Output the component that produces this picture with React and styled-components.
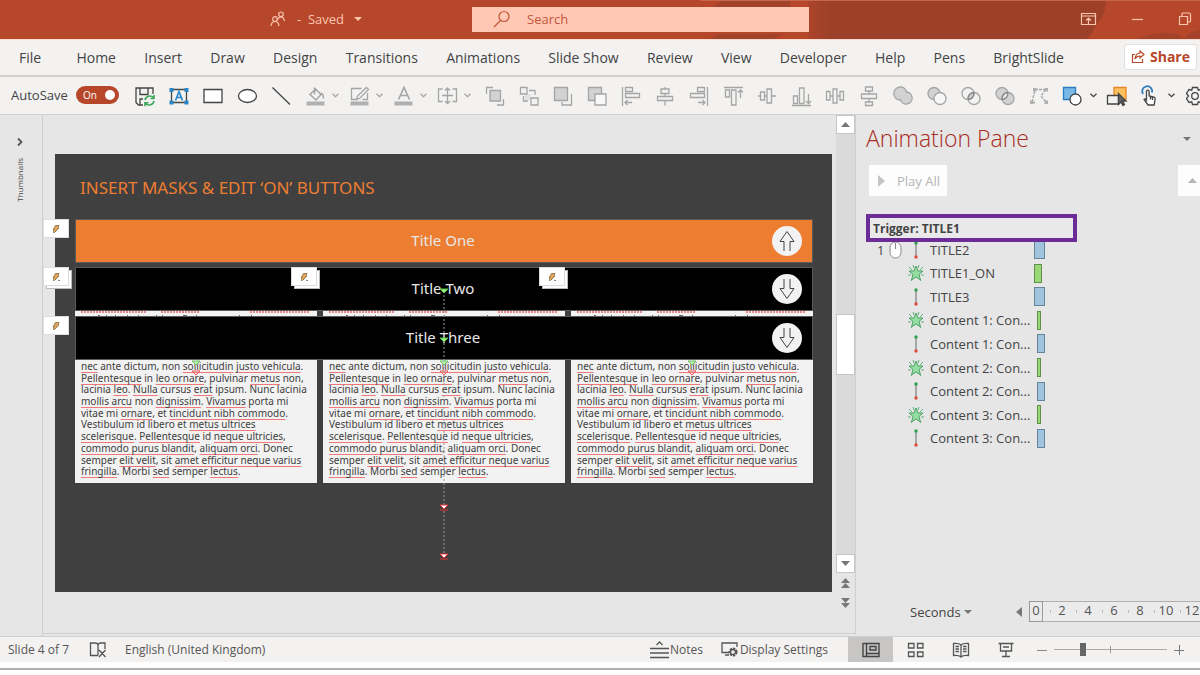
import React from 'react';
import styled, { createGlobalStyle, css } from 'styled-components';

const GlobalStyle = createGlobalStyle`
  * {
    box-sizing: border-box;
  }
  body {
    margin: 0;
    background: #fff;
    color: #444;
    font-family: 'Open Sans', 'Noto Sans', sans-serif;
  }
  button {
    font: inherit;
    color: inherit;
    border: none;
    background: none;
    padding: 0;
  }
`;

const Window = styled.div`
  min-height: 100vh;
  display: flex;
  flex-direction: column;
  overflow: hidden;
`;

/* Title bar */

const TitleBar = styled.header`
  position: relative;
  display: flex;
  align-items: center;
  height: 39px;
  padding-left: 270px;
  padding-bottom: 1px;
  background: #b7472a;
  color: #fbc5b0;
`;

const TitleArt = styled.svg`
  position: absolute;
  top: 0;
  right: 0;
  width: 500px;
  height: 39px;
`;

const FileStatus = styled.button`
  display: flex;
  align-items: center;
  gap: 10px;
  width: 202px;
  font-size: 13px;
  color: #fbc5b0;
`;

const SearchBox = styled.label`
  position: relative;
  display: flex;
  align-items: center;
  gap: 16px;
  flex: 0 1 337px;
  height: 25px;
  padding-left: 21px;
  background: #ffc8b4;
  color: #c4573a;
`;

const SearchInput = styled.input`
  flex: 1;
  min-width: 0;
  border: none;
  outline: none;
  padding: 0;
  background: transparent;
  font: 13px 'Open Sans', sans-serif;
  color: #c4573a;
  &::placeholder {
    color: #c4573a;
    opacity: 1;
  }
`;

const WindowButtons = styled.div`
  position: relative;
  display: flex;
  gap: 34px;
  margin-left: auto;
  margin-right: 8px;
  svg {
    display: block;
  }
`;

/* Ribbon tabs */

const TabBar = styled.nav`
  display: flex;
  align-items: center;
  height: 38px;
  padding: 0 3px 2px 19px;
  background: #f3f2f1;
  border-top: 1px solid #fbdcd0;
  border-bottom: 2px solid #d2d0ce;
`;

const Tabs = styled.div`
  display: flex;
  flex: 1;
  justify-content: space-between;
  margin-right: 60px;
  padding-top: 2px;
`;

const Tab = styled.button`
  font-size: 14px;
  line-height: 20px;
  white-space: nowrap;
  &:first-child {
    padding-right: 7px;
  }
`;

const ShareButton = styled.button`
  display: flex;
  align-items: center;
  gap: 5px;
  height: 26px;
  padding: 0 6px;
  background: #fff;
  border: 1px solid #e1dfdd;
  border-radius: 3px;
  color: #b7472a;
  font-size: 14px;
  font-weight: 700;
`;

/* Quick access toolbar */

const Toolbar = styled.div`
  display: flex;
  align-items: center;
  height: 38px;
  padding-left: 11px;
  background: #f3f2f1;
  border-bottom: 1px solid #d2d0ce;
  overflow: hidden;
`;

const AutoSave = styled.label`
  display: flex;
  align-items: center;
  justify-content: space-between;
  flex: none;
  width: 108px;
  margin-right: 9px;
  padding-bottom: 2px;
  font-size: 13px;
`;

const Toggle = styled.span`
  position: relative;
  display: flex;
  align-items: center;
  width: 43px;
  height: 18px;
  padding-left: 7px;
  border-radius: 9px;
  background: #b7472a;
  color: #fff;
  font-size: 10px;
`;

const ToggleInput = styled.input`
  appearance: none;
  position: absolute;
  inset: 0;
  margin: 0;
  &::after {
    content: '';
    position: absolute;
    top: 4px;
    right: 4px;
    width: 10px;
    height: 10px;
    border-radius: 50%;
    background: #fff;
  }
`;

const ToolButton = styled.button`
  display: flex;
  align-items: center;
  flex: none;
  gap: 5px;
  width: ${p => (p.$menu ? 44 : 34)}px;
  height: 32px;
  padding-left: 5px;
  margin-right: ${p => (p.$endsGroup ? 4 : 0)}px;
`;

const ToolIcon = styled.svg`
  flex: none;
  width: 24px;
  height: 24px;
  fill: none;
  stroke: ${p => (p.$active ? '#444' : '#a5a5a5')};
  stroke-width: 1.3;
`;

/* Workspace */

const Workspace = styled.main`
  display: flex;
  flex: 1;
  background: #e6e6e6;
`;

const ThumbnailRail = styled.button`
  display: flex;
  flex-direction: column;
  align-items: center;
  gap: 11px;
  flex: none;
  width: 43px;
  padding: 22px 3px 0 0;
  border-right: 1px solid #cfcfcf;
  font-size: 8px;
`;

const RailLabel = styled.span`
  writing-mode: vertical-rl;
  transform: rotate(180deg);
`;

const Canvas = styled.section`
  display: flex;
  flex: 1;
  min-width: 0;
  margin-bottom: 2px;
  padding: 39px 4px 41px 12px;
  border-bottom: 1px solid #cfcfcf;
`;

const Slide = styled.div`
  position: relative;
  flex: 1;
  padding: 23px 19px 0 20px;
  background: #404040;
  font-family: 'Noto Sans', sans-serif;
`;

const SlideTitle = styled.h1`
  margin: 0 0 20px;
  padding-left: 5px;
  font-size: 17px;
  line-height: 22px;
  font-weight: 400;
  color: #ed7d31;
`;

const Bar = styled.div`
  position: relative;
  display: flex;
  align-items: center;
  justify-content: center;
  height: 44px;
  padding: 0 2px 2px 0;
  border: 1px solid #5a5a5a;
  background: ${p => (p.$on ? '#ed7d31' : '#000')};
  color: #e8e8e8;
  font-size: 15px;
`;

const RoundButton = styled.button`
  position: absolute;
  top: 6px;
  right: 10px;
  display: grid;
  place-items: center;
  width: 30px;
  height: 30px;
  border-radius: 50%;
  background: #f2f2f2;
  svg {
    transform: ${p => (p.$down ? 'rotate(180deg)' : 'none')};
  }
`;

const Tag = styled.span`
  position: absolute;
  top: -1px;
  left: ${p => p.$left};
  display: grid;
  place-items: center;
  width: 26px;
  height: 19px;
  background: #fff;
  border: 1px solid #ddd;
  ${p =>
    p.$stacked &&
    css`
      box-shadow: 3px 3px 0 -1px #fff, 3px 3px 0 0 #bbb;
    `}
`;

const Columns = styled.div`
  display: grid;
  grid-template-columns: repeat(3, 1fr);
  gap: 6px;
`;

const Peek = styled.svg`
  width: 100%;
  height: 5px;
  background: #f2f2f2;
`;

const Gap = styled.div`
  height: 4px;
`;

const TextBox = styled.div`
  display: grid;
  grid-auto-rows: 1fr;
  height: 123px;
  padding: 0 6px 6px;
  background: #f2f2f2;
  color: #404040;
  font-size: 10px;
  line-height: 12px;
  white-space: nowrap;
  div {
    height: 11px;
  }
`;

const Misspelt = styled.span`
  text-decoration: underline solid #f07878 1px;
  text-underline-offset: 2px;
  text-decoration-skip-ink: none;
`;

const MotionPaths = styled.svg`
  position: absolute;
  inset: 0;
  width: 100%;
  height: 100%;
`;

/* Scroll bar */

const ScrollBar = styled.div`
  display: flex;
  flex-direction: column;
  flex: none;
  width: 20px;
  padding-bottom: 20px;
  margin-bottom: 2px;
  border-right: 1px solid #cfcfcf;
  border-bottom: 1px solid #cfcfcf;
`;

const ScrollTrack = styled.div`
  flex: 1;
  padding-top: 180px;
  background: #dadada;
`;

const ScrollThumb = styled.div`
  height: 61px;
  background: #fff;
  border: 1px solid #c6c6c6;
`;

const ScrollButton = styled.button`
  display: grid;
  place-items: center;
  height: ${p => (p.$plain ? 20 : 19)}px;
  background: ${p => (p.$plain ? 'none' : '#fff')};
  border: ${p => (p.$plain ? 'none' : '1px solid #c6c6c6')};
`;

/* Animation pane */

const Pane = styled.aside`
  display: flex;
  flex-direction: column;
  flex: none;
  width: 344px;
  padding: 7px 0 14px 10px;
  overflow: hidden;
`;

const PaneHeader = styled.div`
  display: flex;
  align-items: center;
  justify-content: space-between;
  padding-right: 9px;
  margin-bottom: 10px;
`;

const PaneTitle = styled.h2`
  margin: 0;
  padding-bottom: 1px;
  font-size: 23px;
  line-height: 32px;
  font-weight: 300;
  color: #a82c1c;
`;

const PaneButtons = styled.div`
  display: flex;
  justify-content: space-between;
  padding-left: 3px;
`;

const PaneButton = styled.button`
  display: flex;
  align-items: center;
  gap: 12px;
  height: 31px;
  width: ${p => (p.$small ? 22 : 78)}px;
  padding-left: 9px;
  background: #fdfdfd;
  color: #b4b4b4;
  font-size: 13px;
  white-space: nowrap;
`;

const Trigger = styled.div`
  position: relative;
  z-index: 1;
  width: 211px;
  height: 28px;
  margin-top: 18px;
  padding-left: 3px;
  border: 4px solid #6b2c98;
  background: #e9e9e9;
  font-size: 12px;
  line-height: 21px;
  font-weight: 700;
`;

const EffectList = styled.ul`
  display: grid;
  grid-auto-rows: 1fr;
  height: 212px;
  margin: -4px 0 0;
  padding: 0;
  list-style: none;
`;

const Effect = styled.li`
  display: grid;
  grid-template-columns: 12px 18px 18px 108px auto;
  align-items: center;
  padding-left: 11px;
  font-size: 13px;
  line-height: 20px;
  white-space: nowrap;
`;

const EffectIcon = styled.svg`
  width: 18px;
  height: 20px;
`;

const EffectName = styled.span`
  padding-left: 5px;
`;

const Timing = styled.span`
  width: ${p => p.$width}px;
  height: 19px;
  margin-left: ${p => (p.$late ? 4 : 1)}px;
  border: 1px solid ${p => (p.$entrance ? '#5f8f4c' : '#65859c')};
  background: ${p => (p.$entrance ? '#98d877' : '#a0c4dc')};
`;

const Timeline = styled.div`
  display: flex;
  align-items: center;
  margin-top: auto;
  padding-left: 44px;
  font-size: 13px;
`;

const UnitSelect = styled.button`
  display: flex;
  align-items: center;
  gap: 3px;
  flex: none;
  width: 106px;
`;

const Ruler = styled.div`
  display: flex;
  flex: 1;
  min-width: 0;
  height: 21px;
  margin-left: 7px;
  border: 1px solid #b0b0b0;
  border-right: none;
  background: #ebebeb;
`;

const Tick = styled.span`
  display: flex;
  justify-content: space-between;
  align-items: center;
  flex: none;
  width: 26px;
  line-height: 19px;
  color: #555;
  &::after {
    content: '';
    width: 1px;
    height: 3px;
    margin-right: 5px;
    background: #bbb;
  }
`;

const TickLabel = styled.span`
  display: flex;
  justify-content: center;
  width: 14px;
  height: 21px;
  margin-left: -1px;
  outline: ${p => (p.$current ? '1px solid #999' : 'none')};
  outline-offset: -1px;
`;

/* Status bar */

const StatusBar = styled.footer`
  display: flex;
  align-items: center;
  height: 26px;
  padding-left: 8px;
  background: #f3f2f1;
  border-top: 1px solid #d2d0ce;
  font-size: 12px;
  color: #555;
`;

const StatusText = styled.span`
  width: ${p => p.$width || 'auto'};
  white-space: nowrap;
  svg {
    display: block;
  }
`;

const StatusTools = styled.div`
  display: flex;
  gap: 18px;
  margin-left: auto;
  margin-right: 20px;
`;

const StatusButton = styled.button`
  display: flex;
  align-items: center;
  gap: 1px;
  white-space: nowrap;
`;

const ViewButton = styled.button`
  display: grid;
  place-items: center;
  width: 45px;
  height: 25px;
  background: ${p => (p.$selected ? '#c8c6c4' : 'none')};
`;

const Zoom = styled.div`
  display: flex;
  align-items: center;
  justify-content: space-between;
  width: 147px;
  margin: 0 16px 0 9px;
`;

const ZoomSlider = styled.input`
  appearance: none;
  width: 113px;
  height: 12px;
  margin: 0;
  background: linear-gradient(#999, #999) 50% 50% / 1px 7px no-repeat,
    linear-gradient(#aaa, #aaa) 50% 50% / 100% 1px no-repeat;
  &::-webkit-slider-thumb {
    appearance: none;
    width: 6px;
    height: 13px;
    background: #666;
  }
`;

const WindowEdge = styled.div`
  height: 13px;
  padding-top: 6px;
  &::before {
    content: '';
    display: block;
    height: 2px;
    background: #b0b0b0;
  }
`;

const Triangle = ({ d = 'M0 0h8l-4 4z', w = 8, h = 4, color = '#777' }) => (
  <svg width={w} height={h} fill={color}>
    <path d={d} />
  </svg>
);

const Chevron = ({ color = '#a5a5a5' }) => (
  <svg width="7" height="5" fill="none" stroke={color} strokeWidth="1.3">
    <path d="M.5 .7l3 3 3-3" />
  </svg>
);

const LIGHT = '#e2e2e2';
const GREY = '#d2d2d2';

const tools = [
  { name: 'Save', active: true, art: <><path d="M10 21H5.500L3 18.500V4h17v6M7 4v6.500h8V4M7 21v-6h3" /><g stroke="#3da85a" strokeWidth="1.600"><path d="M12 16a5 5 0 0 1 8.500-2.500M21 11v3.500h-3.500M21 17a5 5 0 0 1-8.500 2.500M12 22.200v-3.500h3.500" /></g></> },
  { name: 'Text Box', active: true, art: <><path d="M4.500 5.500h15v13h-15z" /><g fill="#2b88c8" stroke="none"><path d="M2.500 4h4v4h-4zM17.500 4h4v4h-4zM2.500 16.500h4v4h-4zM17.500 16.500h4v4h-4z" /></g><path d="M8.500 16.500L12 7.500l3.500 9M9.800 13.500h4.400" stroke="#2b88c8" strokeWidth="1.700" /></> },
  { name: 'Rectangle', active: true, art: <path d="M3 5.500h18v13H3z" fill="#fff" /> },
  { name: 'Oval', active: true, art: <ellipse cx="12.500" cy="12" rx="9" ry="6.500" fill="#fff" /> },
  { name: 'Line', active: true, art: <path d="M3.500 3.500l17.500 17" /> },
  { name: 'Shape Fill', menu: true, art: <><path d="M3.500 17.500h18v4h-18z" fill="#b0b0b0" stroke="none" /><path d="M11.500 3.500v7M12.500 5l5.500 5.500-5 5.500L7 10.500zM17.500 10q2.500-2 3 4.500" strokeWidth="1.500" /></> },
  { name: 'Shape Outline', menu: true, art: <><path d="M3.500 17.500h18v4h-18z" fill="#b0b0b0" stroke="none" /><path d="M14.500 4.500H4.500v11h5M20.500 9v6.500h-5M19.500 3.500l2 2-8.500 8.500-3.500 1.500 1-3.500z" /></> },
  { name: 'Font Color', menu: true, art: <><path d="M3.500 17.500h18v4h-18z" fill="#b0b0b0" stroke="none" /><path d="M7.500 15.500L13 3.500l5.500 12M9.500 11.500h7" strokeWidth="1.600" /></> },
  { name: 'Resize', menu: true, endsGroup: true, art: <path d="M7.500 5h-4v12.500h4M17.500 5h4v12.500h-4M7 11.500h11M12.500 4v15.500M10 6.500L12.500 4 15 6.500M10 17l2.500 2.500L15 17" /> },
  { name: 'Bring to Front', art: <><path d="M10 3.500H3.500V10M20.500 15v6H14" /><path d="M7 6.500h10.500v10.500H7z" fill={GREY} /></> },
  { name: 'Send to Back', art: <><path d="M12 6.500h6V11M6.500 12v5H11" /><path d="M8 10h6v6H8z" fill={LIGHT} stroke="none" /><path d="M3.500 3.500H10V10H3.500zM14 14h7v7h-7z" /></> },
  { name: 'Bring Forward', art: <><path d="M20.500 10v11H11v-3" /><path d="M3.500 3.500h13v13h-13z" fill={GREY} /></> },
  { name: 'Send Backward', art: <><path d="M3.500 3.500h13v13h-13z" fill={GREY} /><path d="M10 10h11v11H10z" fill="#f8f8f8" /></> },
  { name: 'Align Left', art: <path d="M3.500 3v19M6.500 3.500h7v4h-7zM6.500 9.500h14v4h-14zM13 18.500H6M8.500 16L6 18.500 8.500 21" /> },
  { name: 'Align Center', art: <path d="M12 3v2M12 9.500v3M12 16.500v5M8 5h8v4.500H8zM4.500 12.500h15v4h-15z" /> },
  { name: 'Align Right', art: <path d="M20.500 3v19M10.500 3.500h7v4h-7zM3.500 9.500h14v4h-14zM11 18.500h7M15.500 16l2.500 2.500-2.500 2.500" /> },
  { name: 'Align Top', art: <path d="M3 3.500h19M4.500 6h4v7h-4zM10.500 6H15v15h-4.500zM19.500 14V6M17 8.500L19.500 6 22 8.500" /> },
  { name: 'Align Middle', art: <path d="M3 12h2.500M9.500 12H12M16.500 12H21M5.500 8h4v8h-4zM12 5h4.500v14H12z" /> },
  { name: 'Align Bottom', art: <path d="M3 21.500h19M4.500 12h4v7.500h-4zM10.500 4H15v15.500h-4.500zM19.500 10v9.500M17 17l2.500 2.500L22 17" /> },
  { name: 'Distribute Horizontally', art: <path d="M3.500 7.500h3.500v8.500H3.500zM10 5h4v14h-4zM17 7.500h3.500v8.500H17zM7 12h3M14 12h3" /> },
  { name: 'Distribute Vertically', art: <path d="M8.500 3h7v4h-7zM4.500 10h15v4.500h-15zM8.500 18h7v3.500h-7zM12 7v3M12 14.500V18" /> },
  { name: 'Union', art: <path d="M9 3a6 6 0 0 1 6.500 5 6 6 0 1 1-6 8A6.500 6.500 0 1 1 9 3z" fill={GREY} /> },
  { name: 'Combine', art: <><circle cx="9" cy="9.500" r="6" fill={GREY} /><circle cx="15" cy="14.500" r="6" fill="#f7f7f7" /></> },
  { name: 'Fragment', art: <><circle cx="9" cy="9.500" r="6" /><circle cx="15" cy="14.500" r="6" /><path d="M9.200 15.500a6 6 0 0 1 5.600-7A6 6 0 0 1 9.200 15.500z" fill={GREY} stroke="#888" /></> },
  { name: 'Intersect', art: <><circle cx="9" cy="9.500" r="6" fill={GREY} /><circle cx="15" cy="14.500" r="6" fill={GREY} /><path d="M9.200 15.500a6 6 0 0 1 5.600-7A6 6 0 0 1 9.200 15.500z" fill="#ececec" stroke="#888" /></> },
  { name: 'Edit Points', art: <><path d="M8 5.500h10M5 18L8 6M18.500 5.500L14 12l5 6M5 18.500h4" strokeDasharray="3 1" /><g fill="#b0b0b0" stroke="none"><path d="M6 4h3.500v3.500H6zM17.500 4H21v3.500h-3.500zM3 16.500h3.500V20H3zM17.500 16.500H21V20h-3.500z" /></g></> },
  { name: 'Shapes', active: true, menu: true, art: <><path d="M2.500 3.500h12v12h-12z" fill="#7ab8e8" stroke="#2b7cc0" /><circle cx="14.500" cy="15.500" r="5.500" fill="#fff" /></> },
  { name: 'Selection Pane', active: true, art: <><path d="M9 3.500h12v12H9z" fill="#fbc15e" stroke="#e8862a" /><path d="M2.500 11.500h11v8.500h-11z" fill="#f3f2f1" /><path d="M13.500 9.500v11l2.500-2.500 2 3.500 1.500-1-2-3.500h3.500z" fill="#666" stroke="#444" /></> },
  { name: 'Touch Mode', active: true, menu: true, art: <><path d="M4 10a5 5 0 1 1 9-1.500" stroke="#2b7cc0" strokeWidth="1.800" /><path d="M7.500 16V7.500a1.300 1.300 0 0 1 2.600 0v4.500l5 1q1.200.5 1 2l-1 6h-6L5 15.500q1-1.500 2.500.5zM11.500 12.500v3M13.500 13v3" fill="#fff" /></> },
  { name: 'Options', active: true, art: <><path d="M9.500 3.500h5l.8 2.700 2.700-.7 2.500 4-2 2.500 2 2.500-2.500 4-2.700-.7-.8 2.700h-5l-.8-2.700-2.700.7-2.500-4 2-2.500-2-2.500 2.500-4 2.700.7z" /><circle cx="12" cy="12" r="3.300" /></> },
];

const tabs = [
  'File', 'Home', 'Insert', 'Draw', 'Design', 'Transitions', 'Animations',
  'Slide Show', 'Review', 'View', 'Developer', 'Help', 'Pens', 'BrightSlide',
];

// Words in [brackets] carry the spell checker underline
const bodyLines = [
  '[nec] ante dictum, non [sollicitudin] [justo vehicula].',
  '[Pellentesque] in [leo ornare], pulvinar [metus] non,',
  'lacinia [leo]. [Nulla] cursus [erat] ipsum. Nunc lacinia',
  '[mollis arcu] non [dignissim]. [Vivamus] porta mi',
  'vitae mi [ornare], et [tincidunt nibh commodo].',
  'Vestibulum id libero et [metus ultrices]',
  '[scelerisque]. [Pellentesque] id [neque ultricies],',
  '[commodo purus blandit], [aliquam orci]. Donec',
  'semper [elit velit], sit [amet efficitur neque varius]',
  '[fringilla]. Morbi [sed] semper [lectus].',
];

const effects = [
  { name: 'TITLE2', width: 11, first: true },
  { name: 'TITLE1_ON', entrance: true, width: 8 },
  { name: 'TITLE3', width: 11 },
  { name: 'Content 1: Con...', entrance: true, width: 4, late: true },
  { name: 'Content 1: Con...', width: 8, late: true },
  { name: 'Content 2: Con...', entrance: true, width: 4, late: true },
  { name: 'Content 2: Con...', width: 8, late: true },
  { name: 'Content 3: Con...', entrance: true, width: 4, late: true },
  { name: 'Content 3: Con...', width: 8, late: true },
];

const BodyText = () => (
  <TextBox>
    {bodyLines.map(line => (
      <div key={line}>
        {line.split(/[[\]]/).map((part, i) => (i % 2 ? <Misspelt key={i}>{part}</Misspelt> : part))}
      </div>
    ))}
  </TextBox>
);

const PeekText = () => (
  <Peek>
    <path d="M6 1h66M86 1h39M175 1h60" stroke="#ec8a8a" strokeWidth="2" strokeDasharray="2 1" />
    <path d="M23 4.500h2M31 4.500h1M40 4.500h1M52 4.500h1M63 4.500h1M81 4.500h1M87 4.500h1M108 4.500h4M121 4.500h1M164 4.500h1M176 4.500h1" stroke="#666" />
  </Peek>
);

const EffectTag = ({ left = '-33px', stacked }) => (
  <Tag $left={left} $stacked={stacked}>
    <svg width="10" height="10">
      <path d="M4.500 1.500H8L7 4.500h.5L3.500 8.500H2.500L3 6H2z" fill="#dca45c" stroke="#7a5a2c" strokeWidth=".7" />
      {stacked && <path d="M7 8.500h2" stroke="#888" />}
    </svg>
  </Tag>
);

const ArrowButton = ({ down }) => (
  <RoundButton $down={down} aria-label={down ? 'Open' : 'Close'}>
    <svg width="16" height="22" fill="none" stroke="#444">
      <path d="M5 21V11.500H1L8 1.500l7 10h-4V21" />
    </svg>
  </RoundButton>
);

const Marker = ({ x, y, color, fill }) => (
  <g stroke={color} fill={fill}>
    <path d={`M${x - 4} ${y - 2}h8l-4 4z`} />
    {color === '#d33' && <path d={`M${x - 4} ${y + 3}h8`} />}
  </g>
);

const StarIcon = () => (
  <EffectIcon viewBox="0 0 18 20">
    <path d="M2 4l3 3M16 4l-3 3M1 12h3M17 12h-3M4 18l2-3M14 18l-2-3M6 2l1 3M12 2l-1 3" stroke="#5fb37a" />
    <path d="M9 3l2 5h5l-4 3.500 1.500 5.500L9 14l-4.500 3L6 11.500 2 8h5z" fill="#93dca2" stroke="#4fa368" />
  </EffectIcon>
);

const PathIcon = () => (
  <EffectIcon viewBox="0 0 18 20">
    <path d="M9 3v14" stroke="#666" />
    <circle cx="9" cy="3" r="1.700" fill="#2f9e4f" />
    <circle cx="9" cy="17" r="1.700" fill="#e04a3a" />
  </EffectIcon>
);

export default class App extends React.Component {
  renderTitleBar() {
    return (
      <TitleBar>
        <TitleArt viewBox="0 0 500 39">
          <defs>
            <linearGradient id="shade">
              <stop offset="0" stopColor="#ac442a" />
              <stop offset=".08" stopColor="#9c4029" />
            </linearGradient>
          </defs>
          <path d="M108 0h298q0 14-9 24-4 8-10 15H108z" fill="url(#shade)" />
          <path d="M22 0h68v7H14zM18 34h64l-8 5H10z" fill="#a3422a" />
          <path d="M438 39q18-9 40-5l6 5zM484 39q4-8 16-9v9z" fill="#a5422a" />
          <path d="M0 .5h500" stroke="#c4664c" />
        </TitleArt>
        <FileStatus>
          <svg width="17" height="16" fill="none" stroke="#fbc5b0" strokeWidth="1.200">
            <circle cx="5" cy="8" r="2.300" />
            <circle cx="11" cy="3.300" r="2.300" />
            <path d="M1 15q.5-4.500 4-4.500T9 15M8 8.500q.5-2.500 3-2.500t3.500 4" />
          </svg>
          <span>-&nbsp; Saved</span>
          <Triangle color="#fbc5b0" />
        </FileStatus>
        <SearchBox>
          <svg width="18" height="18" fill="none" stroke="#c4573a" strokeWidth="1.200">
            <circle cx="11" cy="6.500" r="5" />
            <path d="M7.500 10.500L1 17" />
          </svg>
          <SearchInput type="text" placeholder="Search" aria-label="Search" />
        </SearchBox>
        <WindowButtons>
          <button aria-label="Ribbon Display Options">
            <svg width="17" height="14" fill="none" stroke="#fbc5b0" strokeWidth="1.200">
              <path d="M1.500 1.500h14v11h-14zM1.500 4h14M8.500 12V6M6 8.500L8.500 6 11 8.500" />
            </svg>
          </button>
          <button aria-label="Minimize">
            <svg width="13" height="14" stroke="#fbc5b0" strokeWidth="1.200">
              <path d="M1 7.500h11" />
            </svg>
          </button>
          <button aria-label="Restore">
            <svg width="14" height="14" fill="none" stroke="#fbc5b0" strokeWidth="1.200">
              <path d="M1.500 4.500h8v8h-8zM4 4.500V2q0-1 1-1h6q1.500 0 1.500 1.500V9q0 1-1 1h-2" />
            </svg>
          </button>
        </WindowButtons>
      </TitleBar>
    );
  }

  renderSlide() {
    return (
      <Slide>
        <SlideTitle>INSERT MASKS &amp; EDIT ‘ON’ BUTTONS</SlideTitle>
        <Bar $on>
          Title One
          <ArrowButton />
          <EffectTag />
        </Bar>
        <Gap />
        <Bar>
          Title Two
          <ArrowButton down />
          <EffectTag stacked />
          <EffectTag stacked left="calc(33.33% - 30px)" />
          <EffectTag stacked left="calc(66.66% - 28px)" />
        </Bar>
        <Columns>
          <PeekText />
          <PeekText />
          <PeekText />
        </Columns>
        <Bar>
          Title Three
          <ArrowButton down />
          <EffectTag />
        </Bar>
        <Columns>
          <BodyText />
          <BodyText />
          <BodyText />
        </Columns>
        <MotionPaths viewBox="55 154 777 438">
          <path d="M444 291v265" stroke="#999" strokeDasharray="2 2" />
          <Marker x={444} y={291} color="#4cbf3a" fill="#a6f08a" />
          <Marker x={444} y={340} color="#4cbf3a" fill="#a6f08a" />
          {[196, 444, 692].map(x => (
            <g key={x}>
              <Marker x={x} y={363} color="#6cc46a" fill="#bdf0b0" />
              <Marker x={x} y={373} color="#e55" fill="none" />
            </g>
          ))}
          <Marker x={444} y={507} color="#d33" fill="#fff" />
          <Marker x={444} y={556} color="#d33" fill="#fff" />
        </MotionPaths>
      </Slide>
    );
  }

  renderPane() {
    return (
      <Pane>
        <PaneHeader>
          <PaneTitle>Animation Pane</PaneTitle>
          <Triangle />
        </PaneHeader>
        <PaneButtons>
          <PaneButton>
            <Triangle d="M0 0l7 6-7 6z" w={7} h={12} color="#c4c4c4" />
            Play All
          </PaneButton>
          <PaneButton $small aria-label="Move Up">
            <Triangle d="M1 5h9L5.500 0z" w={10} h={5} color="#b4b4b4" />
          </PaneButton>
        </PaneButtons>
        <Trigger>Trigger: TITLE1</Trigger>
        <EffectList>
          {effects.map((effect, i) => (
            <Effect key={i}>
              <span>{effect.first && '1'}</span>
              {effect.first ? (
                <svg width="13" height="18" fill="#fff" stroke="#888">
                  <rect x="1" y="1" width="11" height="16" rx="5.500" />
                  <path d="M6.500 2v6" />
                </svg>
              ) : (
                <span />
              )}
              {effect.entrance ? <StarIcon /> : <PathIcon />}
              <EffectName>{effect.name}</EffectName>
              <Timing $width={effect.width} $entrance={effect.entrance} $late={effect.late} />
            </Effect>
          ))}
        </EffectList>
        <Timeline>
          <UnitSelect>
            Seconds
            <Triangle />
          </UnitSelect>
          <Triangle d="M6 0v10L0 5z" w={6} h={10} />
          <Ruler>
            {[0, 2, 4, 6, 8, 10, 12].map(n => (
              <Tick key={n}>
                <TickLabel $current={n === 0}>{n}</TickLabel>
              </Tick>
            ))}
          </Ruler>
        </Timeline>
      </Pane>
    );
  }

  renderStatusBar() {
    return (
      <StatusBar>
        <StatusText $width="81px">Slide 4 of 7</StatusText>
        <StatusText $width="36px">
          <svg width="18" height="17" fill="none" stroke="#555" strokeWidth="1.300">
            <path d="M9 14.500H1.500V2H6q3 0 3 2v10.500M9 4q0-2 3-2h4v6M10 9l6.500 7M16.500 9L10 16" />
          </svg>
        </StatusText>
        <StatusText>English (United Kingdom)</StatusText>
        <StatusTools>
          <StatusButton>
            <svg width="19" height="20" fill="none" stroke="#555" strokeWidth="1.300">
              <path d="M6.500 5l3-3 3 3M0 8.500h19M0 13h19M0 17.500h19" />
            </svg>
            Notes
          </StatusButton>
          <StatusButton>
            <svg width="18" height="17" fill="none" stroke="#555" strokeWidth="1.300">
              <path d="M8 11.500H1V2h15v4M4 14h4" />
              <circle cx="12" cy="11" r="3.500" strokeWidth="2" strokeDasharray="2.200 1" />
              <circle cx="12" cy="11" r="2.500" />
            </svg>
            Display Settings
          </StatusButton>
        </StatusTools>
        <ViewButton $selected aria-label="Normal">
          <svg width="18" height="16" fill="none" stroke="#444" strokeWidth="1.400">
            <path d="M1 1.500h16v13H1zM4.500 1.500v13M4.500 11.500H17M8 4.500h6V8H8z" />
          </svg>
        </ViewButton>
        <ViewButton aria-label="Slide Sorter">
          <svg width="18" height="16" fill="none" stroke="#555" strokeWidth="1.300">
            <path d="M1.500 1.500H7V6H1.500zM10.500 1.500H16V6h-5.500zM1.500 10H7v4.500H1.500zM10.500 10H16v4.500h-5.500z" />
          </svg>
        </ViewButton>
        <ViewButton aria-label="Reading View">
          <svg width="18" height="16" fill="none" stroke="#555" strokeWidth="1.300">
            <path d="M9 3Q7 1 1.500 1.500v12Q7 13 9 15q2-2 7.500-1.500v-12Q11 1 9 3zv12M3.500 4.500H7M3.500 7H7M3.500 9.500H7M11 4.500h3.500M11 7h3.500M11 9.500h3.500" />
          </svg>
        </ViewButton>
        <ViewButton aria-label="Slide Show">
          <svg width="16" height="16" fill="none" stroke="#555" strokeWidth="1.300">
            <path d="M.5 1.500h15M2.500 1.500v7.500h11V1.500M5 5h6M8 9v5.500M4 14.500h8" />
          </svg>
        </ViewButton>
        <Zoom>
          <svg width="10" height="10" stroke="#888"><path d="M0 5.500h10" /></svg>
          <ZoomSlider type="range" min="0" max="100" defaultValue="24" aria-label="Zoom" />
          <svg width="10" height="10" stroke="#777"><path d="M0 5.500h10M5.500 0v10" /></svg>
        </Zoom>
      </StatusBar>
    );
  }

  render() {
    return (
      <Window>
        <GlobalStyle />
        {this.renderTitleBar()}
        <TabBar>
          <Tabs>
            {tabs.map(tab => (
              <Tab key={tab}>{tab}</Tab>
            ))}
          </Tabs>
          <ShareButton>
            <svg width="14" height="14" fill="none" stroke="#b7472a" strokeWidth="1.200">
              <path d="M4 4.500H1.500v8h10V9M9 1l4 3.500-4 3.500V6Q5.500 6 4 9q.5-5.500 5-6z" />
            </svg>
            Share
          </ShareButton>
        </TabBar>
        <Toolbar>
          <AutoSave>
            AutoSave
            <Toggle>
              On
              <ToggleInput type="checkbox" defaultChecked />
            </Toggle>
          </AutoSave>
          {tools.map(tool => (
            <ToolButton
              key={tool.name}
              $menu={tool.menu}
              $endsGroup={tool.endsGroup}
              aria-label={tool.name}
            >
              <ToolIcon viewBox="0 0 24 24" $active={tool.active}>
                {tool.art}
              </ToolIcon>
              {tool.menu && <Chevron color={tool.active ? '#444' : undefined} />}
            </ToolButton>
          ))}
        </Toolbar>
        <Workspace>
          <ThumbnailRail>
            <svg width="6" height="10" fill="none" stroke="#555" strokeWidth="1.800">
              <path d="M1 1.500L4.500 5 1 8.500" />
            </svg>
            <RailLabel>Thumbnails</RailLabel>
          </ThumbnailRail>
          <Canvas>{this.renderSlide()}</Canvas>
          <ScrollBar>
            <ScrollButton aria-label="Scroll Up">
              <Triangle d="M0 5h9L4.500 0z" w={9} h={5} />
            </ScrollButton>
            <ScrollTrack>
              <ScrollThumb />
            </ScrollTrack>
            <ScrollButton aria-label="Scroll Down">
              <Triangle d="M0 0h9L4.500 5z" w={9} h={5} />
            </ScrollButton>
            <ScrollButton $plain aria-label="Previous Slide">
              <Triangle d="M0 5h9L4.500 0zM0 10h9L4.500 5z" w={9} h={10} />
            </ScrollButton>
            <ScrollButton $plain aria-label="Next Slide">
              <Triangle d="M0 0h9L4.500 5zM0 5h9l-4.500 5z" w={9} h={10} />
            </ScrollButton>
          </ScrollBar>
          {this.renderPane()}
        </Workspace>
        {this.renderStatusBar()}
        <WindowEdge />
      </Window>
    );
  }
}
